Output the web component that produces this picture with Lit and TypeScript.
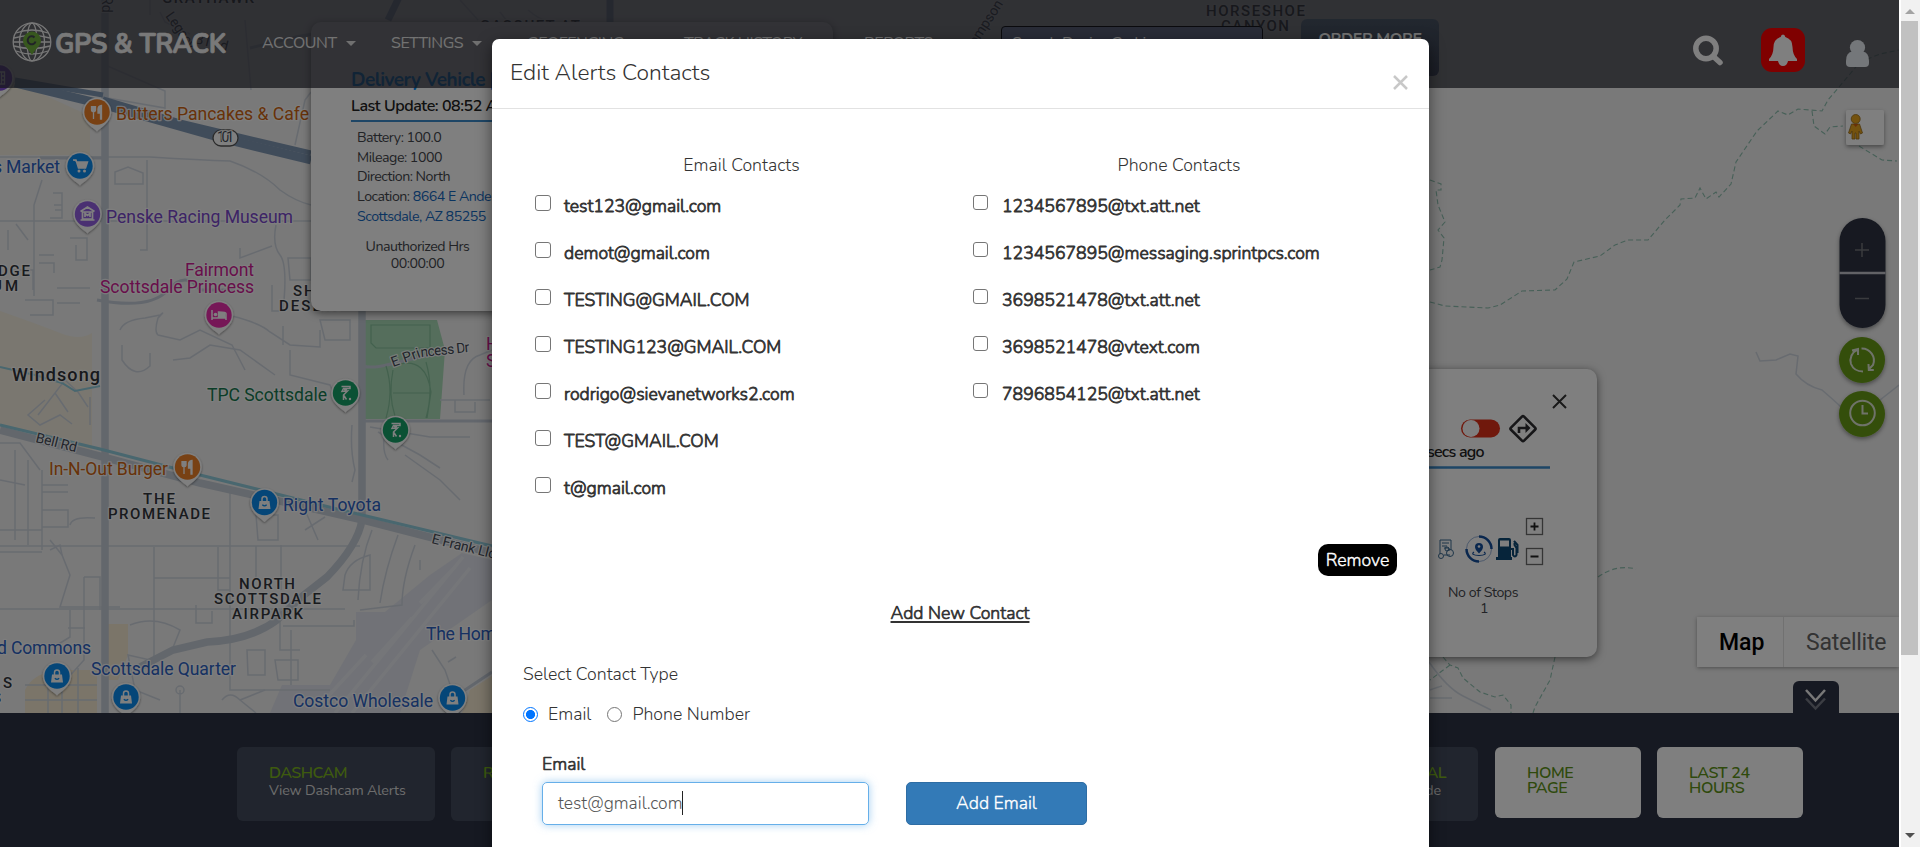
import { LitElement, html, svg, css } from 'lit';
import { customElement } from 'lit/decorators.js';

const EMAILS = ['test123@gmail.com', 'demot@gmail.com', 'TESTING@GMAIL.COM', 'TESTING123@GMAIL.COM', 'rodrigo@sievanetworks2.com', 'TEST@GMAIL.COM', 't@gmail.com'];
const PHONES = ['1234567895@txt.att.net', '1234567895@messaging.sprintpcs.com', '3698521478@txt.att.net', '3698521478@vtext.com', '7896854125@txt.att.net'];

const GLYPHS: Record<string, unknown> = {
  food: svg`<path d="M-5.500-6v4a2 2 0 0 0 4 0v-4M-3.500-6V7M3.500 7V1H1V-3Q1.200-6 4.500-6.500V7z" fill="#fff" stroke="#fff" stroke-width="1.300"/>`,
  cart: svg`<path d="M-7-6h3l2.500 8h7l2-6H-3.300" fill="#fff" stroke="#fff" stroke-width="1.500"/><circle cx="-1" cy="5" r="1.500" fill="#fff"/><circle cx="4.500" cy="5" r="1.500" fill="#fff"/>`,
  museum: svg`<path d="M-7-2.500L0-7l7 4.500M-5-2V5H5V-2zM-7 6H7M-2.500 3v-3.500l2.500 2 2.500-2V3" fill="none" stroke="#fff" stroke-width="1.700"/>`,
  bed: svg`<path d="M-7-5V5M-7 3H7V5M7 3V-1.500Q7-3-.5-3V2.500H7" fill="none" stroke="#fff" stroke-width="1.500"/><path d="M0-2.500h5.500q1 0 1 1V3H0z" fill="#fff"/><circle cx="-3.500" cy="-.5" r="1.800" fill="#fff"/>`,
  golf: svg`<path d="M-4-6.500H4.500V-4.500H-2l-1.500 3L2-2-2 2V7M-2 2L1 6.500" fill="none" stroke="#fff" stroke-width="1.500"/><circle cx="0" cy="-3.500" r="1.600" fill="#fff"/><circle cx="4.500" cy="6" r="1.200" fill="#fff"/>`,
  bag: svg`<path d="M-5-1.500H5L6 6.500H-6z" fill="#fff"/><path d="M-2.500-1v-2.500a2.500 2.500 0 0 1 5 0V-1" fill="none" stroke="#fff" stroke-width="1.500"/><path d="M-2.200 2.300q2.200 2 4.400 0" fill="none" stroke="#0a8cf0" stroke-width="1.200"/>`,
  film: svg`<path d="M-5-6H5V6H-5zM-2-6V6M2-6V6M-5-2H-2M-5 2H-2M2-2H5M2 2H5" fill="none" stroke="#fff" stroke-width="1.300"/>`,
};
const pin = (x: number, y: number, color: string, glyph: string) => svg`
  <g transform="translate(${x} ${y})">
    <path d="M0 19.500C-3 16-14 11-14.300 0a14.300 14.300 0 0 1 28.600 0C14 11 3 16 0 19.500z" fill="#fff" filter="url(#soft)"/>
    <circle r="12.700" fill="${color}"/>${GLYPHS[glyph]}
  </g>`;
const label = (x: number, y: number, w: number, text: string, cls: string) =>
  svg`<text class="${cls}" x="${x}" y="${y}" textLength="${w}">${text}</text>`;

@customElement('city-map')
class CityMap extends LitElement {
  static styles = css`
    :host { display: block; }
    svg { display: block; }
    text { font-family: Roboto, sans-serif; font-size: 17.600px; paint-order: stroke; stroke: #fff; stroke-opacity: .8; stroke-width: 2.500px; stroke-linejoin: round; }
    .food { fill: #d06410; } .shop { fill: #2c62c4; } .museum { fill: #7b48cc; } .hotel { fill: #d01c96; } .golf { fill: #167a50; }
    .area { fill: #33363c; font-weight: 500; font-size: 15px; }
    .town { fill: #303338; font-weight: 500; font-size: 18px; }
    .road { fill: #454b57; font-size: 14px; }
    .thin { fill: none; stroke: #d0d7e0; stroke-width: 1.500; }
    .mid { fill: none; stroke: #c6cfda; stroke-width: 3; }
    .big { fill: none; stroke: #c6ced8; stroke-width: 7.500; }
    .trail { fill: none; stroke: #8fc0b0; stroke-width: 1.100; stroke-dasharray: 5 3; }
  `;
  render() {
    return html`<svg width="1899" height="713" viewBox="0 0 1899 713">
      <defs><filter id="soft" x="-40%" y="-40%" width="180%" height="180%"><feDropShadow dx="0" dy="1" stdDeviation="1" flood-opacity=".45"/></filter></defs>
      <rect width="1899" height="713" fill="#f2f2f2"/>
      <path d="M0 82L20 84 90 116V155H0zM0 311Q40 325 60 333T92 333V450L0 424z" fill="#f4efe0"/>
      <path d="M106 624H128V655L118 680H106zM25 713V690Q34 672 60 670H97V713zM470 690L492 676V713H462z" fill="#f6ead2"/>
      <path d="M356 612H385L430 575 462 553 492 560V600L420 650 400 713H270L282 685H330L356 640z" fill="#e2e5ee"/>
      <path d="M335 713L463 557M352 713L470 568M420 603l35-36M372 662l40-44M320 705l46-50" stroke="#ebedf3" stroke-width="3.500" fill="none"/>
      <path d="M363 320H437L445 350 440 419H365V368L363 366z" fill="#aadcb8"/>
      <path d="M363 366C380 372 420 352 446 354" class="mid"/>
      <path d="M371 325V343L376 348H430V325zM386 366q8 25 0 52M393 370q-5 25 2 46M393 393H430M400 364q26-6 31 28-3 20-4 26M426 418q8-28 0-56" fill="none" stroke="#86c29c" stroke-width="1.200"/>

      <g class="thin">
        <path d="M0 221H311M0 157H150Q200 160 230 161 262 172 280 190 295 201 311 205M147 160V250H140M115 184V172L128 167 143 173V184zM102 97L165 108V91L103 64M245 20L251 90M295 145L305 100 311 92"/>
        <path d="M42 180L34 205V296M53 193H62V218H50M54 205H62M55 210H62M70 238H87V260H76V245M39 255H54M39 263H54V273M8 230V250M16 224L28 240M10 270H33V290M57 288H90M25 300H53V315H30M57 303H80"/>
        <path d="M240 248V258L272 246M276 225Q272 245 280 255T283 311H272V285M288 258H311V280H290zM120 330Q124 320 145 318L160 315Q166 310 158 318Q154 332 158 335L180 340 200 330 232 345 245 370M232 316Q260 323 270 332L290 345 320 347V330M283 326V345M320 320H350V340H325z"/>
        <path d="M122 345V360Q135 380 150 366V353M173 360L190 358 210 345 240 350 275 375M290 350V375Q310 380 330 385L338 405M352 425Q350 450 355 470L352 482M387 420Q380 450 388 460M378 432L420 455 440 468M370 427L430 437H470M405 455L440 480 460 500M464 395Q462 360 480 355L492 350M440 400H490M455 400V412H475V402"/>
        <path d="M38 415L65 380 78 392 88 407M45 400L28 415 40 425 60 415 72 424M55 393L68 412M90 397V425M0 443H20L40 470M0 480L25 485M42 485H68M42 492H68M42 527H68V510H42zM70 525Q72 516 95 518M0 530H42M0 546H360M0 552H42M15 450V540M28 460V545M42 470V550"/>
        <path d="M50 540L62 555 70 575 60 607H120M84 577H100V610M84 577V660L66 680M0 609H345M154 547V665M154 578H230V590H218V547M230 492V690H330M256 515H278V540H258zM256 546V580M281 545V590M305 510L318 540M325 517L305 530M372 530Q360 560 358 600M398 535Q385 570 380 603M415 545Q402 580 402 605L360 610M420 560V570M345 575Q350 560 370 555V590H343z"/>
        <path d="M130 625Q155 615 180 630L172 650 150 660 128 655 135 690 160 700M196 605V623H212V611M247 650H265V675H248zM280 610V650H300M283 626H354V620M275 660H298V680H278zM291 685V630M240 700L256 713M180 690V713M180 690m-4 0a4 4 0 1 1 8 0 4 4 0 1 1-8 0M222 700Q230 690 240 700L265 690M432 650L445 670 460 713M448 662l8-5"/>
        <path d="M48 665V713M62 668V713M78 668V713M25 685H97M25 700H97M68 628H85M57 645L70 637V610M50 550L60 545 62 555"/>
        <path d="M150 0V15M160 12L165 22 190 34M460 0L478 20M500 12L520 38M528 10q12 10 18 10"/>
      </g>
      <path class="mid" d="M250 48L300 36 340 30M40 158H104M97 300Q150 310 168 290T200 290H235" stroke-width="2"/>
      <path class="big" d="M105 0V713"/>
      <path class="big" d="M362 311V520Q358 545 327 577L300 598 277 620Q250 640 207 642L173 650 140 667" stroke-width="5"/>
      <path class="mid" d="M462 692L492 672M363 421H492"/>
      <path class="big" d="M0 430L103 457 200 483 363 520 433 538 492 553"/>
      <path d="M0 425L100 449 200 475 333 508 492 546" stroke="#92cede" stroke-width="3" fill="none"/>
      <path d="M0 367L35 375 62 383 75 391 100 386" stroke="#92cede" stroke-width="2" fill="none"/>
      <path d="M388 20Q398 0 402-10M610 0V25" stroke="#9fb2cd" stroke-width="7" fill="none"/>
      <path d="M15 83L101 104 225 139 311 160" stroke="#8098b4" stroke-width="9" fill="none"/>
      <path d="M15 80L103 95M103 99L180 122 311 153" stroke="#8098b4" stroke-width="5" fill="none"/>

      <path class="trail" d="M1430 180L1441 184V190H1436L1438 205 1445 222 1438 230 1444 238 1442 260 1440 267 1430 270M1430 302L1445 306 1488 308 1500 305 1522 291 1555 290 1567 279 1574 262 1600 256 1615 245 1628 240H1648L1665 220 1680 205 1681 199 1695 198 1700 188 1706 199 1716 192 1719 197 1731 184 1736 162 1757 131 1778 111 1788 115 1798 109 1822 111 1828 100 1850 74 1860 62 1880 54 1899 50M1812 111L1814 126 1825 134 1830 127 1843 126M1859 146L1882 160 1897 161M1443 657L1450 665 1458 668 1463 678 1480 692 1495 697 1503 695 1511 705 1511 713M1450 665L1430 680M1555 657L1550 680 1535 707 1533 713M1598 577Q1616 564 1636 569"/>
      <path class="thin" d="M1756 352l4 9 16-1 14-6 8 2-2 18q10 12 26 16 14 12 20 18M1880 400l19-15M1429 662q18 26 34 34l28 14M1430 698h22M1430 690q8-3 12-4"/>

      <rect x="213" y="130" width="25" height="16" rx="8" fill="#fff" stroke="#555" stroke-width="1.300"/>
      <text class="road" x="217" y="142" textLength="17" font-size="11.500">101</text>
      ${label(116, 120, 193, 'Butters Pancakes & Cafe', 'food')}
      ${label(-7, 173, 67, 's Market', 'shop')}
      ${label(106, 223, 187, 'Penske Racing Museum', 'museum')}
      ${label(185, 276, 69, 'Fairmont', 'hotel')}${label(100, 293, 154, 'Scottsdale Princess', 'hotel')}
      ${label(-2, 276, 32, 'DGE', 'area')}${label(-8, 291, 26, 'UM', 'area')}
      ${label(293, 296, 44, 'SHEA', 'area')}${label(279, 311, 64, 'DESERT', 'area')}
      ${label(12, 381, 88, 'Windsong', 'town')}
      ${label(207, 401, 120, 'TPC Scottsdale', 'golf')}
      ${label(49, 475, 119, 'In-N-Out Burger', 'food')}
      ${label(283, 511, 98, 'Right Toyota', 'shop')}
      ${label(143, 504, 32, 'THE', 'area')}${label(108, 519, 102, 'PROMENADE', 'area')}
      ${label(239, 589, 56, 'NORTH', 'area')}${label(214, 604, 107, 'SCOTTSDALE', 'area')}${label(232, 619, 71, 'AIRPARK', 'area')}
      ${label(-3, 654, 94, 'd Commons', 'shop')}${label(91, 675, 145, 'Scottsdale Quarter', 'shop')}
      ${label(293, 707, 140, 'Costco Wholesale', 'shop')}${label(426, 640, 79, 'The Home', 'shop')}
      ${label(3, 688, 9, 'S', 'area')}${label(-8, 703, 9, 'S', 'area')}
      ${label(486, 350, 14, 'H', 'hotel')}${label(486, 367, 14, 'S', 'hotel')}
      ${label(162, 3, 92, 'GRAYHAWK', 'area')}${label(480, 31, 100, 'GASQUET AT', 'area')}
      ${label(1206, 16, 99, 'HORSESHOE', 'area')}${label(1221, 31, 68, 'CANYON', 'area')}
      <text class="road" transform="translate(35 442) rotate(14)" textLength="42">Bell Rd</text>
      <text class="road" transform="translate(431 543) rotate(14)" textLength="80">E Frank Lloyd</text>
      <text class="road" transform="translate(393 367) rotate(-20)" textLength="30">E Pri</text>
      <text class="road" transform="translate(421 357) rotate(-6)" textLength="49">ncess Dr</text>
      <text class="road" transform="translate(165 16) rotate(55)" textLength="42">Legacy</text>
      <text class="road" transform="translate(194 43) rotate(14)" textLength="34">Blvd</text>
      <text class="road" transform="translate(102 -4) rotate(90)">Rd</text>
      <text class="road" transform="translate(967 60) rotate(-57)">Thompson Peak</text>
      ${pin(-0.500, 78, '#8350d8', 'film')}
      ${pin(97, 112, '#f08228', 'food')}${pin(80, 166, '#0a8cf0', 'cart')}${pin(87.500, 214, '#9460e4', 'museum')}
      ${pin(219, 315, '#ec2fae', 'bed')}${pin(345.500, 393, '#16a368', 'golf')}${pin(395.500, 430, '#16a368', 'golf')}
      ${pin(187.500, 467, '#f08228', 'food')}${pin(264.500, 502.500, '#0a8cf0', 'bag')}${pin(57, 676, '#0a8cf0', 'bag')}
      ${pin(126, 697, '#0a8cf0', 'bag')}${pin(452.500, 698, '#0a8cf0', 'bag')}
    </svg>`;
  }
}

@customElement('top-bar')
class TopBar extends LitElement {
  static styles = css`
    :host { display: block; font-family: Nunito, 'Open Sans', sans-serif; font-size: 16px; letter-spacing: -.45px; color: #e4e4e4; }
    .bar { position: relative; height: 88px; background: rgba(46, 47, 57, .74); box-sizing: border-box; padding-left: 12px; display: flex; align-items: flex-start; }
    .logo { display: block; margin-top: 22px; }
    .nav { display: flex; margin: 32px 0 0 35px; }
    .nav span { line-height: 22px; white-space: nowrap; display: flex; align-items: center; gap: 9px; }
    .nav i { border: 5px solid transparent; border-top-color: #e0e0e0; border-bottom: 0; }
    .acc { width: 129px; } .set { width: 136px; } .geo { width: 157px; } .track { width: 180px; } .rep { width: 137px; }
    .search { width: 250px; height: 30px; margin-top: 26px; border: 1px solid #16171d; border-radius: 4px; background: #52596e; padding: 5px 0 0 10px; box-sizing: content-box; }
    .order { margin: 19px 0 0 38px; width: 138px; height: 57px; border-radius: 6px; background: linear-gradient(#45505f, #363a4b); text-align: center; font-weight: 700; line-height: 19px; padding-top: 11px; box-sizing: border-box; }
    .icons { display: block; margin: 24px 0 0 250px; }
  `;
  render() {
    return html`<div class="bar">
      <svg class="logo" width="215" height="40" viewBox="0 0 215 40">
        <g fill="none" stroke="#efefef" stroke-width="1.300"><circle cx="20" cy="20" r="18.800"/><ellipse cx="20" cy="20" rx="12.500" ry="18.800"/><ellipse cx="20" cy="20" rx="5" ry="18.800"/><path d="M1 20H39M4 11Q20 5 36 11M4 29Q20 35 36 29M2 16Q20 11 38 16M2 24Q20 29 38 24"/></g>
        <path d="M20 33C17 27 11 24 11 18.500a9 9 0 0 1 18 0C29 24 23 27 20 33z" fill="#6fae3c"/>
        <path d="M22.500 15.500a4 4 0 1 0 1 4" fill="none" stroke="#42474f" stroke-width="2"/>
        <text x="43" y="30.500" font-family="Nunito, sans-serif" font-weight="700" font-size="28" textLength="171" lengthAdjust="spacingAndGlyphs" fill="#f2f2f2" stroke="#f2f2f2" stroke-width=".7">GPS &amp; TRACK</text>
      </svg>
      <div class="nav"><span class="acc">ACCOUNT <i></i></span><span class="set">SETTINGS <i></i></span><span class="geo">GEOFENCING</span><span class="track">TRACK HISTORY</span><span class="rep">REPORTS</span></div>
      <div class="search">Search Device Go Live</div>
      <div class="order">ORDER MORE<br>DEVICES</div>
      <svg class="icons" width="190" height="52" viewBox="1689 24 190 52">
        <circle cx="1706" cy="48.500" r="10.200" fill="none" stroke="#fff" stroke-width="5.500"/><path d="M1714 57l6 5.500" stroke="#fff" stroke-width="5.500" stroke-linecap="round"/>
        <rect x="1761" y="28" width="44" height="44" rx="11" fill="#f00"/>
        <path d="M1783 34.500q2 0 2.300 2.500 7 2 7.200 10 .2 8 4.500 12v2h-28v-2q4.300-4 4.500-12 .2-8 7.200-10 .3-2.500 2.300-2.500zM1778 61h10q-1 5-5 5t-5-5z" fill="#fff"/>
        <circle cx="1857.500" cy="47.500" r="7.600" fill="#e9eff4"/><path d="M1846 61q0-8.500 6-9.500h11q6 1 6 9.500v2q0 4-4 4h-15q-4 0-4-4z" fill="#e9eff4"/>
      </svg>
    </div>`;
  }
}

@customElement('vehicle-cards')
class VehicleCards extends LitElement {
  static styles = css`
    :host { font-family: 'Proxima Nova', Nunito, 'Open Sans', sans-serif; font-size: 14.200px; letter-spacing: -.5px; color: #44464c; }
    .card { position: absolute; width: 522px; box-sizing: border-box; background: #fff; border-radius: 10px; box-shadow: 0 2px 9px rgba(0,0,0,.55); }
    .first { left: 311px; top: 22px; height: 289px; padding: 44px 40px 0; }
    .second { left: 1075px; top: 369px; height: 288px; }
    .name { font-size: 19px; line-height: 28px; font-weight: 700; color: #0090ff; letter-spacing: -.55px; }
    .upd { height: 26px; line-height: 24px; font-size: 16px; font-weight: 600; color: #222; border-bottom: 2.500px solid #3c8ccc; white-space: nowrap; letter-spacing: -.45px; }
    .rows { padding: 6px 6px 0; line-height: 19.700px; }
    .rows a { color: #1568c0; }
    .hrs { width: 121px; margin-top: 11px; text-align: center; line-height: 17px; }
    .art { display: block; }
    .art text { font-size: 14.200px; fill: #44464c; }
    .art .ago { font-size: 16px; font-weight: 600; fill: #222; }
  `;
  render() {
    return html`
      <div class="card first">
        <div class="name">Delivery Vehicle | Van</div>
        <div class="upd">Last Update: 08:52 AM</div>
        <div class="rows"><div>Battery: 100.0</div><div>Mileage: 1000</div><div>Direction: North</div><div>Location: <a>8664 E Anderson Dr,</a></div><div><a>Scottsdale, AZ 85255</a></div>
          <div class="hrs">Unauthorized Hrs<br>00:00:00</div></div>
      </div>
      <div class="card second"><svg class="art" width="522" height="288" viewBox="1075 369 522 288">
        <path d="M1553 395l13 13M1566 395l-13 13" stroke="#333" stroke-width="2"/>
        <rect x="1461" y="419.500" width="39" height="18" rx="9" fill="#e03018"/><circle cx="1471" cy="428.500" r="8.500" fill="#fff"/>
        <rect x="1513.500" y="419.500" width="18.500" height="18.500" rx="1.500" transform="rotate(45 1523 429)" fill="none" stroke="#2c2c30" stroke-width="2.600"/>
        <path d="M1519 433v-5h8" fill="none" stroke="#2c2c30" stroke-width="2.600"/><path d="M1525.500 423l5 5-5 5z" fill="#2c2c30"/>
        <text class="ago" x="1427" y="457" textLength="57">secs ago</text>
        <path d="M1115 467.500H1550" stroke="#3c8ccc" stroke-width="2.500"/>
        <g fill="none" stroke="#3d6c94" stroke-width="1"><path d="M1440 554V540h11v10M1442 543h7M1442 546h5M1444 548h5v3M1444 555h6"/><circle cx="1441" cy="556" r="2.500"/><circle cx="1450" cy="553" r="3.500"/><circle cx="1447" cy="549" r="2"/></g>
        <circle cx="1479" cy="549" r="12.500" fill="none" stroke="#9bb4d8"/><path d="M1479 536.500a12.500 12.500 0 0 1 12.500 12.500M1479 561.500a12.500 12.500 0 0 1-12.500-12.500" fill="none" stroke="#144f9c" stroke-width="2.500"/>
        <path d="M1479 553.500q-4-4-4-6.500a4 4 0 0 1 8 0q0 2.500-4 6.500z" fill="#144f9c"/><circle cx="1479" cy="546.500" r="1.300" fill="#fff"/><path d="M1474 552q-4 3 5 3.500 9-.5 5-3.500" fill="none" stroke="#144f9c" stroke-width="1.200"/>
        <path d="M1498 540q0-2 2-2h9q2 0 2 2v17h1v3h-16v-3h2zM1500 540.500v6h9v-6z" fill="#0d4874" fill-rule="evenodd"/><path d="M1511 549h2v6q2 3 3.500 0v-7l-2-3v-4M1514 541l3.500 4v8" fill="none" stroke="#0d4874" stroke-width="2"/>
        <g fill="none" stroke="#6b6b6b" stroke-width="1.300"><rect x="1526.500" y="518.500" width="16" height="16"/><rect x="1526.500" y="548.500" width="16" height="16"/></g>
        <path d="M1530.500 526.500h8M1534.500 522.500v8M1530.500 556.500h8" stroke="#222" stroke-width="1.800"/>
        <text x="1448" y="596.500" textLength="70">No of Stops</text><text x="1480" y="613">1</text>
      </svg></div>`;
  }
}

@customElement('map-controls')
class MapControls extends LitElement {
  static styles = css`
    svg { position: absolute; left: 1780px; top: 100px; }
    .types { position: absolute; left: 1697px; top: 617px; width: 202px; height: 50px; display: flex; background: #fff; box-shadow: 0 1px 4px rgba(0,0,0,.35); font: 23px/51px Roboto, sans-serif; color: #666; }
    .types b { width: 87px; box-sizing: border-box; border-right: 1px solid #e2e2e2; padding-left: 22px; color: #000; font-weight: 500; }
    .types span { padding-left: 22px; letter-spacing: -.25px; }
    .tab { position: absolute; left: 1793px; top: 681px; width: 46px; height: 32px; background: #2d3244; border-radius: 6px 6px 0 0; }
    .tab svg { position: static; display: block; }
  `;
  render() {
    return html`<svg width="119" height="350" viewBox="1780 100 119 350">
        <defs><filter id="sh" x="-30%" y="-30%" width="160%" height="160%"><feDropShadow dx="0" dy="2" stdDeviation="2" flood-opacity=".4"/></filter></defs>
        <rect x="1846" y="110" width="38" height="35" rx="2" fill="#fff" filter="url(#sh)"/>
        <g fill="#e8a41c" stroke="#9a7020" stroke-width=".8"><path d="M1851.500 124h8l3 9-2 1-1.500-3v8h-3v-6h-1v6h-3v-8l-1.500 3-2-1z"/><circle cx="1855.700" cy="119" r="4.500"/></g><path d="M1853 124l2.700 3 2.700-3z" fill="#d06010"/>
        <rect x="1839.500" y="218" width="46" height="110" rx="23" fill="#2d3242" filter="url(#sh)"/>
        <path d="M1839.500 273h46" stroke="#c4c4cc" stroke-width="2.300"/>
        <path d="M1855 250h14M1862 243v14M1855 298.500h14" stroke="#74767c" stroke-width="1.500"/>
        <circle cx="1862" cy="360" r="23" fill="#689c14" filter="url(#sh)"/><circle cx="1862" cy="414" r="23" fill="#689c14" filter="url(#sh)"/>
        <g fill="none" stroke="#dfe6d4" stroke-width="2"><path d="M1857.500 349.500A12 12 0 0 0 1851 364Q1854 371.500 1863 371.500M1861.500 348.500A12 12 0 0 1 1873 365L1869 369M1852 350.500l6-1.500v6M1868.500 364l.3 6h5"/><circle cx="1862.500" cy="413" r="12.300"/><path d="M1862.500 405v8.500h5.500"/></g>
      </svg>
      <div class="types"><b>Map</b><span>Satellite</span></div>
      <div class="tab"><svg width="46" height="32" viewBox="0 0 46 32" fill="none" stroke-width="2.500"><path d="M13 17.500l9.500 10 9.500-10" stroke="#777b86"/><path d="M13 9l9.500 10.500L32 9" stroke="#f0f0f0"/></svg></div>`;
  }
}

@customElement('quick-links')
class QuickLinks extends LitElement {
  static styles = css`
    :host { display: block; font-family: Nunito, 'Open Sans', sans-serif; }
    .row { height: 134px; box-sizing: border-box; background: #2d3244; padding: 34px 96px 0 237px; display: flex; align-items: flex-start; gap: 16px; }
    .tile { height: 74px; box-sizing: border-box; flex: 1; min-width: 0; border-radius: 6px; background: #434b5c; padding: 18px 32px 0; font-size: 14.300px; letter-spacing: -.15px; line-height: 17px; color: #dadada; white-space: nowrap; }
    .tile b, .light { font-size: 16px; color: #7cb51c; font-weight: 600; letter-spacing: -.55px; }
    .tile b { display: block; line-height: 17px; }
    .dash { flex: 0 0 198px; }
    .end { text-align: right; margin-right: 1px; }
    .end span { margin-right: 5px; }
    .light { flex: 0 0 146px; height: 71px; box-sizing: border-box; background: #fff; border-radius: 6px; padding: 19px 32px 0; line-height: 15px; color: #5f9418; letter-spacing: -.35px; }
  `;
  render() {
    return html`<div class="row">
      <div class="tile dash"><b>DASHCAM</b>View Dashcam Alerts</div>
      <div class="tile"><b>REPORTS</b></div><div class="tile"></div><div class="tile"></div><div class="tile"></div>
      <div class="tile end"><b>MANUAL</b><span>User Guide</span></div>
      <div class="light">HOME<br>PAGE</div><div class="light">LAST 24<br>HOURS</div>
    </div>`;
  }
}

@customElement('contacts-dialog')
class ContactsDialog extends LitElement {
  static styles = css`
    :host { display: block; font-family: Nunito, 'Open Sans', sans-serif; font-size: 17.700px; font-weight: 300; color: #333; }
    .dialog { width: 937px; height: 900px; background: #fff; border-radius: 7px; box-shadow: 0 5px 15px rgba(0,0,0,.5); }
    .head { height: 70px; box-sizing: border-box; border-bottom: 1px solid #e2e2e2; padding: 19px 21px 0 18px; display: flex; justify-content: space-between; }
    h4 { margin: 0; font-weight: 300; font-size: 22.800px; line-height: 30px; }
    .x { margin-top: 17px; }
    .body { padding: 43px 31px 0 30px; }
    .cols { display: grid; grid-template-columns: 438px 438px; height: 387px; }
    .cap { text-align: center; line-height: 26px; margin-bottom: 15px; padding-left: 1px; }
    .phones .cap { padding: 0; }
    .item { display: flex; align-items: center; gap: 13px; height: 26px; margin-bottom: 21px; padding-left: 13px; -webkit-text-stroke: .8px #333; font-size: 17.650px; }
    .box { width: 16px; height: 16px; box-sizing: border-box; border: 1.300px solid #767676; border-radius: 3px; margin-top: -7px; }
    .phones .box { width: 15px; height: 15px; } .phones .item { gap: 14px; }
    .strong { -webkit-text-stroke: .7px; }
    .actions { display: flex; justify-content: flex-end; padding-right: 1px; margin-top: 5px; }
    .remove { width: 79px; height: 32px; background: #000; color: #fff; border-radius: 10px; text-align: center; line-height: 32px; -webkit-text-stroke: .4px; }
    .add { text-align: center; margin-top: 24px; line-height: 26px; text-decoration: underline; text-decoration-thickness: 1.500px; text-underline-offset: 2px; text-decoration-skip-ink: none; }
    .type { margin: 35px 0 0 1px; line-height: 26px; }
    .radios { display: flex; align-items: center; margin: 14px 0 0 1px; line-height: 26px; }
    .radio { width: 15px; height: 15px; box-sizing: border-box; border: 1.300px solid #767676; border-radius: 50%; margin-right: 10px; }
    .on { border: 1.500px solid #0075ff; background: radial-gradient(circle, #0075ff 4.200px, #fff 4.900px); }
    .radios span { margin-right: 16px; }
    .form { margin: 24px 0 0 20px; }
    .lbl { line-height: 26px; margin-bottom: 5px; }
    .line { display: flex; gap: 37px; }
    .input { width: 327px; height: 43px; box-sizing: border-box; border: 1.500px solid #66afe9; border-radius: 5px; box-shadow: 0 0 8px rgba(102,175,233,.6); padding: 0 0 2px 15px; display: flex; align-items: center; color: #555; font-size: 17.500px; }
    .caret { width: 1px; height: 24px; background: #222; }
    .btn { width: 181px; height: 43px; box-sizing: border-box; background: #337ab7; border: 1px solid #2e6da4; border-radius: 5px; color: #fff; text-align: center; line-height: 41px; -webkit-text-stroke: .35px; }
  `;
  private item = (t: string) => html`<div class="item"><div class="box"></div><span>${t}</span></div>`;
  render() {
    return html`<div class="dialog">
      <div class="head"><h4>Edit Alerts Contacts</h4><svg class="x" width="15" height="15" viewBox="0 0 15 15"><path d="M1 1l13 13M14 1L1 14" stroke="#c8c8c8" stroke-width="2.500"/></svg></div>
      <div class="body">
        <div class="cols">
          <div><div class="cap">Email Contacts</div>${EMAILS.map(this.item)}</div>
          <div class="phones"><div class="cap">Phone Contacts</div>${PHONES.map(this.item)}</div>
        </div>
        <div class="actions"><div class="remove">Remove</div></div>
        <div class="add strong">Add New Contact</div>
        <div class="type">Select Contact Type</div>
        <div class="radios"><div class="radio on"></div><span>Email</span><div class="radio"></div><span>Phone Number</span></div>
        <div class="form"><div class="lbl strong">Email</div>
          <div class="line"><div class="input">test@gmail.com<div class="caret"></div></div><div class="btn">Add Email</div></div></div>
      </div>
    </div>`;
  }
}

@customElement('app-root')
class AppRoot extends LitElement {
  static styles = css`
    :host { display: block; height: 847px; overflow: hidden; }
    .frame { display: flex; height: 847px; }
    .page { position: relative; width: 1899px; height: 847px; overflow: hidden; }
    .stage { position: relative; height: 713px; overflow: hidden; }
    .top { position: absolute; inset: 0 0 auto 0; }
    .shade { position: absolute; inset: 0; background: rgba(0,0,0,.5); }
    .modal { position: absolute; left: 492px; top: 39px; }
    .bar { width: 17px; padding: 0 2px; background: #f1f1f1; display: flex; flex-direction: column; align-items: center; box-shadow: inset 2px 0 #fff; }
    .up { margin-top: 9px; border: 5px solid transparent; border-bottom-color: #a3a3a3; border-top: 0; }
    .thumb { margin-top: 7px; width: 17px; height: 634px; background: #c1c1c1; }
    .down { margin-top: 178px; border: 5px solid transparent; border-top-color: #505050; border-bottom: 0; }
  `;
  render() {
    return html`<div class="frame">
      <div class="page">
        <div class="stage"><city-map></city-map><vehicle-cards></vehicle-cards><map-controls></map-controls><top-bar class="top"></top-bar></div>
        <quick-links></quick-links>
        <div class="shade"></div>
        <contacts-dialog class="modal"></contacts-dialog>
      </div>
      <div class="bar"><div class="up"></div><div class="thumb"></div><div class="down"></div></div>
    </div>`;
  }
}
